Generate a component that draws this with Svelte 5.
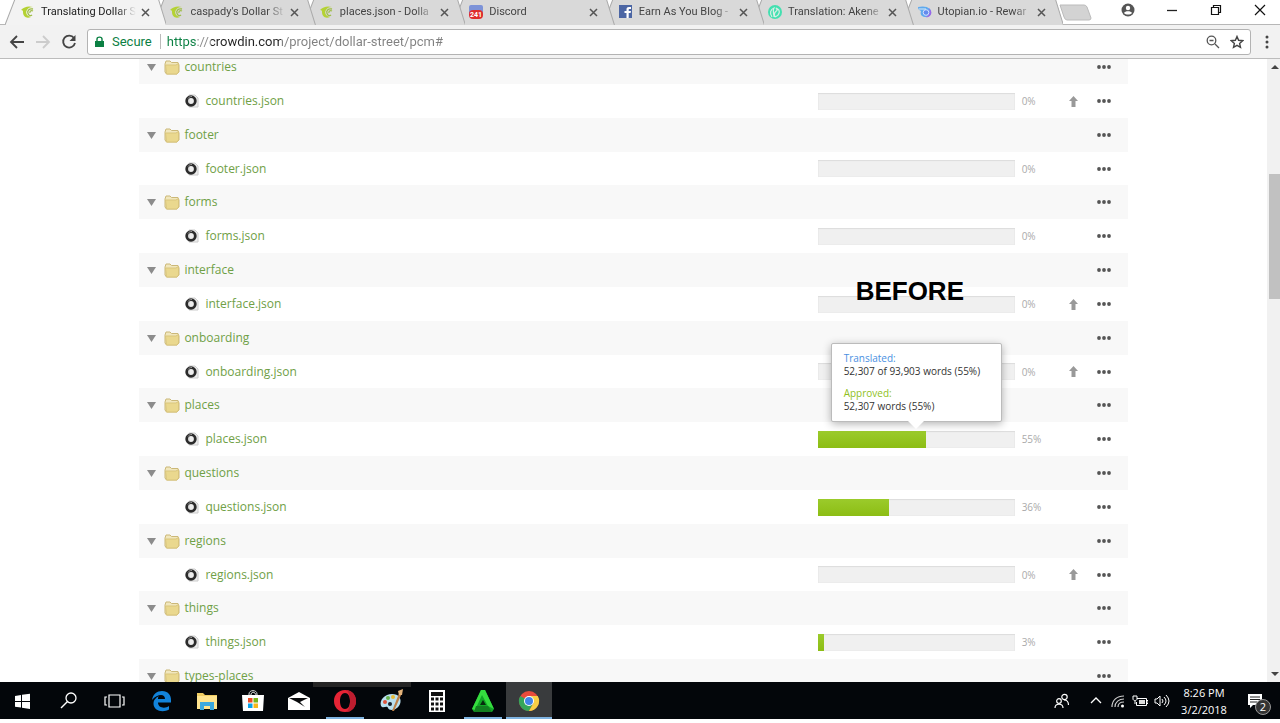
<script>
	const tabs = [
		{ title: "Translating Dollar S", icon: "crowdin", active: true },
		{ title: "caspady's Dollar St", icon: "crowdin" },
		{ title: "places.json - Dolla", icon: "crowdin" },
		{ title: "Discord", icon: "discord" },
		{ title: "Earn As You Blog -", icon: "facebook" },
		{ title: "Translation: Akene", icon: "steem" },
		{ title: "Utopian.io - Rewar", icon: "utopian" },
	];

	const folders = [
		{ name: "countries", percent: 0, upload: true },
		{ name: "footer", percent: 0 },
		{ name: "forms", percent: 0 },
		{ name: "interface", percent: 0, upload: true, note: "BEFORE" },
		{ name: "onboarding", percent: 0, upload: true },
		{ name: "places", percent: 55, tip: true },
		{ name: "questions", percent: 36 },
		{ name: "regions", percent: 0, upload: true },
		{ name: "things", percent: 3 },
		{ name: "types-places" },
	];

	const apps = ["start", "search", "tasks", "edge", "explorer", "store", "mail", "opera", "paint", "calculator", "prism", "chrome"];
	const running = ["opera", "prism", "chrome"];

	let url = $state("https://crowdin.com/project/dollar-street/pcm#");
</script>

{#snippet dots(label)}
	<button class="dots" aria-label={label}>
		<svg width="14" height="4" viewBox="0 0 14 4" fill="#555"><circle cx="2" cy="2" r="1.9" /><circle cx="7" cy="2" r="1.9" /><circle cx="12" cy="2" r="1.9" /></svg>
	</button>
{/snippet}

{#snippet favicon(name)}
	<svg class="favicon" width="14" height="14" viewBox="0 0 14 14" fill="none">
		{#if name == "crowdin"}
			<path d="M0 5C3 2 7 .5 12 2C9 2 7 3 6 5C4 8 6 11 10 12C5 14 2 11 2 7C2 6 2 5 0 5Z" fill="#b4d233" />
			<path d="M12 4C8 3 6 6 7 8.500S10 11 11 10M12 6C10 5 8.500 6.500 9 8" stroke="#9fbd48" stroke-width="1.300" />
		{:else if name == "discord"}
			<rect x="0" y="0" width="14" height="10" rx="2" fill="#7d93d8" />
			<rect x="0" y="5" width="14" height="9" rx="4" fill="#df2d2d" />
			<text x="7" y="12" text-anchor="middle" font-size="7" font-weight="700" fill="#fff">241</text>
		{:else if name == "facebook"}
			<rect x="0" y="0" width="13" height="13" fill="#4c66a4" />
			<path d="M7.500 13V8H5.500V6H7.500V4.500C7.500 2.700 8.500 2 10 2H12V4H10.500C9.800 4 9.700 4.300 9.700 5V6H12L11.600 8H9.700V13Z" fill="#fff" />
		{:else if name == "steem"}
			<circle cx="7" cy="7" r="7" fill="#43e0b0" />
			<path d="M4 12C1 8 3 4 6 3C4 6 6 8 6 12M7 12C4 5 12 7 8 3C13 5 12 10 7 12" stroke="#d9eee6" stroke-width="1.200" />
		{:else}
			<path d="M0 2C4 1 9 1 12 4C15 8 12 12 8 12C3 12 2 9 3 6C1 5 0 4 0 2Z" fill="#5ea9ee" />
			<path d="M11 3C16 8 12 13 7 12C10 12 13 9 11 3Z" fill="#9966e8" />
			<circle cx="8" cy="7.500" r="2.800" stroke="#d7e0ff" fill="#638bed" />
			<path d="M1 4L8 4" stroke="#dcecf8" />
		{/if}
	</svg>
{/snippet}

{#snippet appIcon(name)}
	<svg width="24" height="24" viewBox="0 0 24 24" fill="none">
		{#if name == "start"}
			<path d="M5 7L11 6V12H5ZM12 5.800L20 4.700V12H12ZM5 13H11V18.500L5 17.700ZM12 13H20V20L12 18.800Z" fill="#fff" />
		{:else if name == "search"}
			<circle cx="14" cy="9" r="5" stroke="#fff" stroke-width="1.300" />
			<path d="M10.500 12.500L4 19" stroke="#fff" stroke-width="1.500" />
		{:else if name == "tasks"}
			<path d="M6 6H17V18H6ZM4 8H2V16H4M19 8H21V16H19" stroke="#fff" stroke-width="1.200" />
		{:else if name == "edge"}
			<path d="M3 11C4 5 8 2 13 2C19 2 22 6 22 11V13.500H9C9 19 16 20 20 17V20.500C14 24 4 22 4.500 14C5 10 8 8 10 7C9 8 9 9 9 10H16C16 4 8 5 3 11Z" fill="#1283db" />
		{:else if name == "explorer"}
			<path d="M2 4H8L10 6H22V20H2Z" fill="#efcc62" />
			<path d="M2 7H22V20H2Z" fill="#ffe48f" />
			<path d="M5 21V13H19V21H15V17H9V21Z" fill="#3ba9df" />
		{:else if name == "store"}
			<path d="M8 7V5C8 .500 16 .500 16 5V7M10 7V5C11 2 15 3 15 7" stroke="#ddd" />
			<path d="M1 6H23L22 22H2Z" fill="#fff" />
			<path d="M7 9H11.500V13.500H7Z" fill="#ec4b26" /><path d="M12.500 9H17V13.500H12.500Z" fill="#79b51b" />
			<path d="M7 14.500H11.500V19H7Z" fill="#0aa2e9" /><path d="M12.500 14.500H17V19H12.500Z" fill="#f8b71b" />
		{:else if name == "mail"}
			<path d="M1 9L12 3L23 9V21H1Z" fill="#fff" /><path d="M2 9H21L13 13L18 18L10 13Z" fill="#08090b" />
		{:else if name == "opera"}
			<path fill-rule="evenodd" d="M12 1C5 1 1 6 1 12S5 23 12 23S23 18 23 12S19 1 12 1ZM12 4C15 4 17 7 17 12S15 20 12 20S7 17 7 12S9 4 12 4Z" fill="#e62435" />
			<path d="M13 1C19 1 23 6 23 12S19 23 13 23C16 21 17 17 17 12S16 3 13 1Z" fill="#bd1d2f" />
		{:else if name == "paint"}
			<path d="M2 17C0 11 6 5 13 5C20 5 23 10 21 15C18 22 10 22 9 19C8 16 4 20 2 17Z" fill="#b9dfef" />
			<circle cx="6" cy="13" r="2" fill="#df543d" /><circle cx="9" cy="9" r="2" fill="#68b24c" /><circle cx="14" cy="8" r="2" fill="#e8b934" /><circle cx="11" cy="15" r="2" fill="#18202b" />
			<path d="M21 2L13 22L15 22L23 4Z" fill="#bd8048" /><path d="M19 2L24 0L23 6L20 6Z" fill="#e3b37b" />
		{:else if name == "calculator"}
			<path d="M4 1H20V23H4Z" fill="#fff" /><path d="M6 3H18V7H6Z" fill="#111" />
			<path d="M6 10H18M6 15H18M6 20H18" stroke="#111" stroke-width="3" stroke-dasharray="3 1.500" />
		{:else if name == "prism"}
			<path d="M10 1H14L23 20L21 23H3L1 20Z" fill="#12a526" /><path d="M10 1H14L23 20L17 17L11 6L4 21L1 20Z" fill="#35dc3f" /><path d="M12 11L15 16H9Z" fill="#072c0e" /><path d="M5 17H17L21 23H3Z" fill="#127f20" />
		{:else}
			<circle cx="12" cy="12" r="10" fill="#e84b3c" />
			<path d="M12 12L3.300 7A10 10 0 0 0 12 22L16.500 14Z" fill="#36a65a" />
			<path d="M12 7H20.700A10 10 0 0 1 12 22L16.500 14Z" fill="#f9cf45" />
			<circle cx="12" cy="12" r="5" fill="#fff" /><circle cx="12" cy="12" r="4" fill="#4285e8" />
		{/if}
	</svg>
{/snippet}

<div class="screen">
	<header class="tab-strip">
		<nav class="tabs" aria-label="Tabs">
			{#each tabs as tab, i}
				<div class="tab" class:active={tab.active} style:z-index={tabs.length - i}>
					<svg class="shape" viewBox="0 0 161 25" preserveAspectRatio="none"><path d="M0 25L10 -1H153L161 25" /></svg>
					<a href="#tab-{i}">{@render favicon(tab.icon)}<span>{tab.title}</span></a>
					<button class="close" aria-label="Close tab">
						<svg width="9" height="9" viewBox="0 0 9 9" stroke="#555" stroke-width="1.500"><path d="M1 1L8 8M8 1L1 8" /></svg>
					</button>
				</div>
			{/each}
		</nav>
		<button class="new-tab" aria-label="New tab">
			<svg width="33" height="17" viewBox="0 0 33 17"><path d="M1 1H25Q27 1 28 3L32 14Q32 16 30 16H8Q6 16 5 13Z" fill="#d3d3d3" stroke="#bbb" /></svg>
		</button>
		<div class="window-buttons">
			<button aria-label="Profile"><svg width="14" height="14" viewBox="0 0 14 14"><circle cx="7" cy="7" r="6.500" fill="#555" /><circle cx="7" cy="5" r="2.200" fill="#fff" /><path d="M3 10C4 7.500 10 7.500 11 10C9 12 5 12 3 10Z" fill="#fff" /></svg></button>
			<button aria-label="Minimize"><svg width="12" height="12" viewBox="0 0 12 12" stroke="#222"><path d="M1 6.500H11" stroke-width="1.300" /></svg></button>
			<button aria-label="Restore"><svg width="12" height="12" viewBox="0 0 12 12" fill="none" stroke="#111" stroke-width="1.200"><path d="M1.500 3.500H8.500V10.500H1.500ZM3.500 3V1.500H10.500V8.500H9" /></svg></button>
			<button aria-label="Close"><svg width="12" height="12" viewBox="0 0 12 12" stroke="#111" stroke-width="1.200"><path d="M1 1L11 11M11 1L1 11" /></svg></button>
		</div>
	</header>

	<div class="toolbar">
		<button aria-label="Back"><svg width="16" height="16" viewBox="0 0 16 16" fill="none" stroke="#444" stroke-width="1.800"><path d="M15 8H2M8 2L2 8L8 14" /></svg></button>
		<button aria-label="Forward"><svg width="16" height="16" viewBox="0 0 16 16" fill="none" stroke="#ccc" stroke-width="1.800"><path d="M1 8H14M8 2L14 8L8 14" /></svg></button>
		<button aria-label="Reload"><svg width="16" height="16" viewBox="0 0 16 16" fill="none" stroke="#444" stroke-width="1.800"><path d="M13 4A6 6 0 1 0 14 9" /><path d="M14.500 1V7H8.500Z" fill="#444" stroke="none" /></svg></button>
		<div class="address">
			<svg class="lock" width="9" height="12" viewBox="0 0 9 12"><path d="M0 5H9V11H0Z" fill="#0b8043" /><path d="M2 5V3C2 .500 7 .500 7 3V5" fill="none" stroke="#0b8043" stroke-width="1.400" /></svg>
			<label for="url">Secure</label>
			<input id="url" type="text" spellcheck="false" bind:value={url} />
			<button aria-label="Zoom"><svg width="14" height="14" viewBox="0 0 14 14" fill="none" stroke="#555" stroke-width="1.300"><circle cx="5.500" cy="5.500" r="4.300" /><path d="M9 9L13 13M3.500 5.500H7.500" /></svg></button>
			<button aria-label="Bookmark"><svg width="14" height="14" viewBox="0 0 14 14" fill="none" stroke="#444" stroke-width="1.400"><path d="M7 1.500L8.600 5.300L12.700 5.700L9.600 8.400L10.500 12.400L7 10.300L3.500 12.400L4.400 8.400L1.300 5.700L5.400 5.300Z" /></svg></button>
		</div>
		<button class="menu" aria-label="Menu"><svg width="4" height="14" viewBox="0 0 4 14" fill="#444"><circle cx="2" cy="2" r="1.500" /><circle cx="2" cy="7" r="1.500" /><circle cx="2" cy="12" r="1.500" /></svg></button>
	</div>

	<div class="viewport">
		<main>
			<table>
				<colgroup><col /><col class="col-progress" /><col class="col-upload" /><col class="col-menu" /></colgroup>
				{#each folders as folder}
					<tbody>
						<tr class="folder">
							<td colspan="3">
								<div class="name">
									<svg class="toggle" width="9" height="8" viewBox="0 0 9 8"><path d="M0 1H9L4.500 8Z" fill="#8c8c8c" /></svg>
									<svg class="folder-icon" width="16" height="15" viewBox="0 0 16 15"><path d="M1 4L2 1H6L7.500 2.500H14L15 5V12L13 14H2.500L1 12Z" fill="#f1e7bd" stroke="#cbb878" /><path d="M1.500 5H12L14.500 3.500V12L13 14H2.500Z" fill="#ead88e" stroke="#d9c57c" /></svg>
									<a href="#{folder.name}">{folder.name}</a>
								</div>
							</td>
							<td>{@render dots("Options for " + folder.name)}</td>
						</tr>
						{#if folder.percent != undefined}
							<tr class="file">
								<td>
									<div class="name">
										<svg class="file-icon" width="14" height="14" viewBox="0 0 14 14"><path d="M4 1H10L13 4V13H4Z" fill="#eee" stroke="#ccc" /><circle cx="6" cy="7" r="4.300" fill="none" stroke="#2b2b2b" stroke-width="2.800" /><path d="M3 4.500C4 3 5 2.500 7 2.500" fill="none" stroke="#999" /></svg>
										<a href="#{folder.name}-json">{folder.name}.json</a>
									</div>
								</td>
								<td>
									<div class="progress">
										<div class="bar">
											<div class="fill" style:width={folder.percent + "%"}></div>
										</div>
										<span>{folder.percent}%</span>
										{#if folder.note}<strong class="note">{folder.note}</strong>{/if}
										{#if folder.tip}
											<div class="tip" role="tooltip">
												<p><b>Translated:</b><br />52,307 of 93,903 words (55%)</p>
												<p class="approved"><b>Approved:</b><br />52,307 words (55%)</p>
											</div>
										{/if}
									</div>
								</td>
								<td>
									{#if folder.upload}
										<svg class="upload" width="9" height="11" viewBox="0 0 9 11"><path d="M4.500 0L9 5H6.500V11H2.500V5H0Z" fill="#999" /></svg>
									{/if}
								</td>
								<td>{@render dots("Options for " + folder.name + ".json")}</td>
							</tr>
						{/if}
					</tbody>
				{/each}
			</table>
		</main>
		<div class="scrollbar">
			<button aria-label="Scroll up"><svg width="8" height="4" viewBox="0 0 8 4"><path d="M0 4L4 0L8 4Z" fill="#444" /></svg></button>
			<div class="before"></div>
			<div class="thumb"></div>
			<div class="after"></div>
			<button aria-label="Scroll down"><svg width="8" height="4" viewBox="0 0 8 4"><path d="M0 0L4 4L8 0Z" fill="#444" /></svg></button>
		</div>
	</div>

	<footer class="taskbar">
		{#each apps as app}
			<button class="app {app}" class:running={running.includes(app)} aria-label={app}>{@render appIcon(app)}</button>
		{/each}
		<div class="tray">
			<button aria-label="People"><svg width="16" height="16" viewBox="0 0 16 16" fill="none" stroke="#fff" stroke-width="1.200"><circle cx="10.500" cy="4" r="2.700" /><circle cx="5" cy="8" r="2.300" /><path d="M1 15C1 10 9 10 9 15M10 7C13 7 14.500 9 14.500 12" /></svg></button>
			<button aria-label="Hidden icons"><svg width="12" height="12" viewBox="0 0 12 12" fill="none" stroke="#fff" stroke-width="1.300"><path d="M1 8L6 3L11 8" /></svg></button>
			<button aria-label="Network"><svg width="14" height="14" viewBox="0 0 14 14" fill="none" stroke="#ccc" stroke-width="1.200"><path d="M1 13C1 6 6 2 13 2M4 13C4 8 8 5 13 5M7 13C7 10 9 8 13 8" /><circle cx="11.500" cy="12" r="1.500" fill="#fff" stroke="none" /></svg></button>
			<button aria-label="Battery"><svg width="16" height="14" viewBox="0 0 16 14" fill="none" stroke="#fff"><path d="M5 4.500H14.500V11.500H4.500V8M14.500 6.500H16V9.500H14.500M1 2V5C1 7 5 7 5 5V2M2 1V3M4 1V3M3 7V10" /><path d="M7 6H13V10H7Z" fill="#ddd" stroke="none" /></svg></button>
			<button aria-label="Volume"><svg width="16" height="14" viewBox="0 0 16 14" fill="none" stroke="#fff"><path d="M1 5H3L6 2V12L3 9H1ZM8 5Q10 7 8 9M10 3Q14 7 10 11M12 1Q18 7 12 13" /></svg></button>
			<time datetime="2018-03-02T20:26">8:26 PM<br />3/2/2018</time>
			<button class="notices" aria-label="Notifications"><svg width="16" height="16" viewBox="0 0 16 16"><path d="M1 1H15V12H6L3 15V12H1Z" fill="#fff" /><path d="M3 4H13M3 6.500H13M3 9H10" stroke="#222" /></svg><span>2</span></button>
		</div>
	</footer>
</div>

<style>
	:global(body) {
		margin: 0;
		background: #fff;
	}
	.screen {
		display: flex;
		flex-direction: column;
		height: 100vh;
		box-sizing: border-box;
		padding-bottom: 4px;
		overflow: hidden;
		font-family: "Open Sans", "Noto Sans", sans-serif;
	}
	button {
		display: flex;
		align-items: center;
		justify-content: center;
		flex: none;
		border: none;
		padding: 0;
		background: none;
		font: inherit;
	}
	svg {
		flex: none;
	}
	a {
		color: inherit;
		text-decoration: none;
	}

	.tab-strip {
		display: flex;
		flex: none;
		height: 24px;
		padding-left: 5px;
		border-bottom: 1px solid #b7b7b7;
	}
	.tabs {
		display: flex;
		flex: 0 1 1046px;
		min-width: 0;
	}
	.tab {
		position: relative;
		display: flex;
		flex: 1;
		align-items: center;
		min-width: 0;
		box-sizing: border-box;
		padding-left: 16px;
		font-family: Roboto, sans-serif;
		font-size: 11px;
		line-height: 16px;
		color: #444;
	}
	.shape {
		position: absolute;
		left: 0;
		top: 0;
		width: calc(100% + 12px);
		height: 25px;
		fill: #d9d9d9;
		stroke: #aaa;
	}
	.active .shape {
		fill: #f3f3f3;
	}
	.tab a {
		position: relative;
		display: flex;
		flex: 1;
		align-items: center;
		gap: 6px;
		min-width: 0;
	}
	.tab span {
		flex: 1;
		overflow: hidden;
		white-space: nowrap;
		mask-image: linear-gradient(90deg, #000 80%, transparent);
	}
	.active span {
		color: #222;
	}
	.close {
		position: relative;
		width: 18px;
		height: 18px;
	}
	.new-tab {
		align-self: center;
		margin-left: 8px;
	}
	.window-buttons {
		display: flex;
		align-items: center;
		margin: 0 -2px 4px auto;
	}
	.window-buttons button {
		width: 44px;
		height: 20px;
	}

	.toolbar {
		display: flex;
		align-items: center;
		flex: none;
		gap: 10px;
		height: 33px;
		padding: 0 11px 0 9px;
		background: #f2f2f2;
		border-bottom: 1px solid #bcbcbc;
		font-family: Roboto, sans-serif;
		font-size: 13px;
	}
	.address {
		display: flex;
		align-items: center;
		flex: 1;
		height: 24px;
		padding: 0 6px 0 7px;
		background: #fff;
		border: 1px solid #b3b3b3;
		border-radius: 3px;
	}
	.address label {
		margin-left: 8px;
		padding-right: 8px;
		border-right: 1px solid #bbb;
		line-height: 15px;
		color: #0b8043;
	}
	.address input {
		flex: 1;
		min-width: 0;
		margin-left: 6px;
		padding: 0;
		border: none;
		outline: none;
		font: inherit;
		color: transparent;
		background: linear-gradient(90deg, #0b8043 30px, #888 30px, #888 44px, #222 44px, #222 114px, #808080 114px);
		background-clip: text;
	}
	.address button + button {
		margin-left: 10px;
	}
	.toolbar .menu {
		margin-left: 4px;
	}
	.toolbar > button:nth-child(-n + 3) {
		width: 16px;
	}

	.viewport {
		display: flex;
		flex: 1;
		min-height: 0;
		overflow: hidden;
	}
	main {
		flex: 1;
		overflow: hidden;
	}
	table {
		width: 78%;
		margin: -9px auto 0;
		border-collapse: collapse;
		table-layout: fixed;
		font-size: 12px;
		color: #6fa046;
	}
	.col-progress {
		width: 242px;
	}
	.col-upload {
		width: 28px;
	}
	.col-menu {
		width: 40px;
	}
	td {
		padding: 0;
	}
	tr {
		height: 34px;
	}
	/* two 68px pairs for every 67px one */
	tbody:nth-of-type(3n + 2) .file {
		height: 33px;
	}
	.folder {
		background: #f8f8f8;
	}
	.name {
		display: flex;
		align-items: center;
		padding-left: 8px;
		line-height: 18px;
	}
	.folder-icon {
		margin: 0 4px 0 8px;
	}
	.file .name {
		gap: 6px;
		padding-left: 46px;
	}
	.dots {
		width: 32px;
		height: 16px;
	}
	.upload {
		display: block;
		margin-left: 9px;
	}
	.progress {
		position: relative;
		display: flex;
		align-items: center;
		gap: 7px;
		font-size: 10px;
		line-height: 16px;
		color: #aaa;
	}
	.bar {
		width: 197px;
		height: 17px;
		box-sizing: border-box;
		background: #f0f0f0;
		box-shadow: inset 0 1px 1px #ddd, inset 0 0 1px #ccc;
	}
	.fill {
		height: 100%;
		background: linear-gradient(#9bcb2b, #8cbd14);
	}
	.note {
		position: absolute;
		left: 38px;
		bottom: 7px;
		font: 700 26px/30px "Liberation Sans", Arial, sans-serif;
		color: #000;
	}
	.tip {
		position: absolute;
		left: 13px;
		bottom: 26px;
		width: 171px;
		box-sizing: border-box;
		padding: 8px 12px 8px;
		background: #fff;
		border: 1px solid #bbb;
		border-radius: 2px;
		box-shadow: 0 2px 8px rgba(0, 0, 0, 0.3);
		font-size: 10px;
		line-height: 13px;
		white-space: nowrap;
		color: #333;
	}
	.tip::after {
		content: "";
		position: absolute;
		top: 100%;
		left: 50%;
		margin-left: -8px;
		border: 8px solid transparent;
		border-top-color: #fff;
		border-bottom: 0;
	}
	.tip p {
		margin: 0;
	}
	.tip b {
		font-weight: 400;
		color: #4a90e2;
	}
	.tip .approved {
		margin-top: 9px;
	}
	.tip .approved b {
		color: #8fbf21;
	}

	.scrollbar {
		display: flex;
		flex-direction: column;
		width: 13px;
		background: #f1f1f1;
	}
	.scrollbar button {
		height: 16px;
		padding-left: 3px;
	}
	.before {
		flex: 99;
	}
	.thumb {
		flex: 125;
		margin-left: 2px;
		background: #c1c1c1;
	}
	.after {
		flex: 366;
	}

	.taskbar {
		display: flex;
		flex: none;
		height: 37px;
		background: #03060a;
		color: #fff;
	}
	.app {
		position: relative;
		width: 46px;
	}
	.app.start {
		padding-right: 2px;
	}
	.running::after {
		content: "";
		position: absolute;
		left: 4px;
		right: 4px;
		bottom: 0;
		height: 2px;
		background: #7fb4e2;
	}
	.opera::before {
		content: "";
		position: absolute;
		left: -9px;
		top: 0;
		width: 98px;
		height: 5px;
		background: #252525;
	}
	.chrome {
		background: #393b3d;
	}
	.running.chrome::after {
		left: 0;
		right: 0;
	}
	.tray {
		display: flex;
		align-items: center;
		margin-left: auto;
		padding-right: 9px;
	}
	.tray button {
		width: 22px;
	}
	.tray button:first-child {
		margin-right: 12px;
	}
	time {
		width: 62px;
		font-size: 11px;
		line-height: 17px;
		text-align: center;
	}
	.tray .notices {
		position: relative;
		width: 32px;
		margin-left: 4px;
	}
	.notices span {
		position: absolute;
		left: 16px;
		top: 6px;
		width: 14px;
		border: 1px solid #999;
		border-radius: 50%;
		background: #333;
		color: #fff;
		font-size: 11px;
		line-height: 14px;
	}
</style>
